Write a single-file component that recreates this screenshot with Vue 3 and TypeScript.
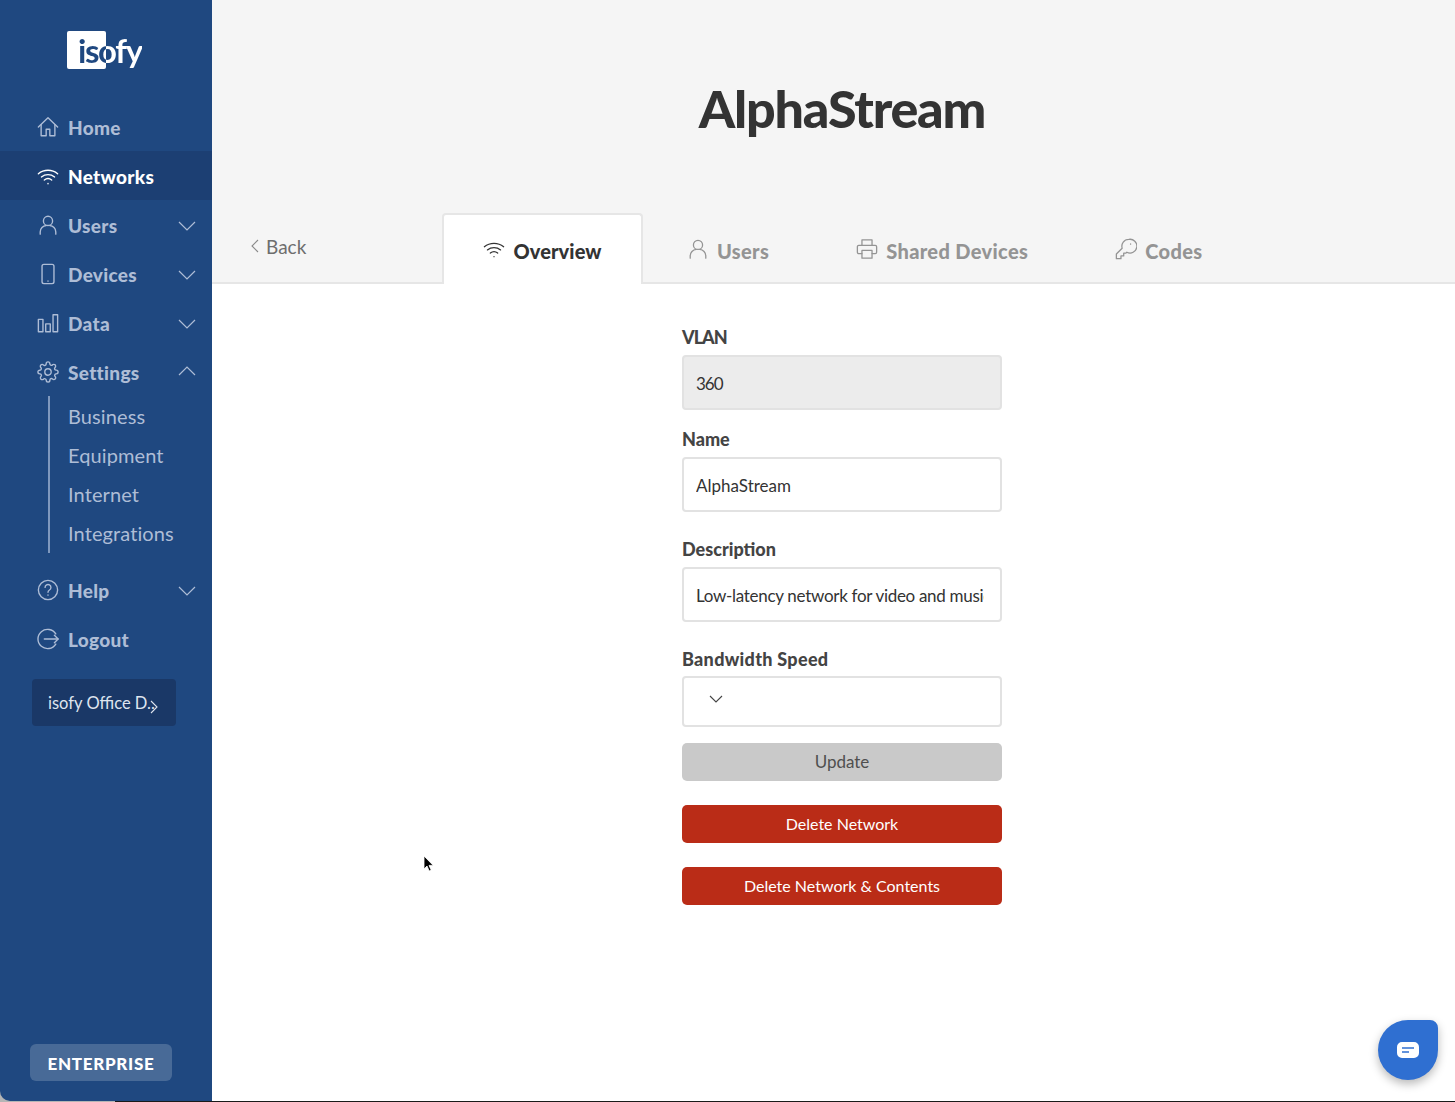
<script setup lang="ts">
type IconName = 'home' | 'wifi' | 'user' | 'phone' | 'bars' | 'gear' | 'help' | 'logout' | 'printer' | 'key'

const icons: Record<IconName, string[]> = {
  home: ['M1.5 12 12 2l10.5 10', 'M4.5 9.5V21.5h5.5v-7h4v7h5.5V9.5'],
  wifi: ['M1.5 9.5C7.5 4.5 16.5 4.5 22.5 9.5', 'M4.8 13C9 9.6 15 9.6 19.2 13', 'M8 16.4c2.4-1.9 5.6-1.9 8 0', 'M12 20.2v.2'],
  user: ['M12 2.5a5 5 0 1 0 0 10 5 5 0 0 0 0-10z', 'M3.5 22v-2.5c0-3.6 3-6.6 6.5-7', 'M20.5 22v-2.5c0-3.6-3-6.6-6.5-7'],
  phone: ['M7.5 1.5h9a2 2 0 0 1 2 2v17a2 2 0 0 1-2 2h-9a2 2 0 0 1-2-2v-17a2 2 0 0 1 2-2z', 'M12 19.6v.2'],
  bars: ['M1.5 8h5v13.5h-5z', 'M9.5 13h5v8.5h-5z', 'M17.5 3h5v18.5h-5z'],
  gear: ['M19.4 15a1.65 1.65 0 0 0 .33 1.82l.06.06a2 2 0 0 1 0 2.83 2 2 0 0 1-2.83 0l-.06-.06a1.65 1.65 0 0 0-1.82-.33 1.65 1.65 0 0 0-1 1.51V21a2 2 0 0 1-2 2 2 2 0 0 1-2-2v-.09A1.65 1.65 0 0 0 9 19.4a1.65 1.65 0 0 0-1.82.33l-.06.06a2 2 0 0 1-2.83 0 2 2 0 0 1 0-2.83l.06-.06a1.65 1.65 0 0 0 .33-1.82 1.65 1.65 0 0 0-1.51-1H3a2 2 0 0 1-2-2 2 2 0 0 1 2-2h.09A1.65 1.65 0 0 0 4.6 9a1.65 1.65 0 0 0-.33-1.82l-.06-.06a2 2 0 0 1 0-2.83 2 2 0 0 1 2.83 0l.06.06a1.65 1.65 0 0 0 1.82.33H9a1.65 1.65 0 0 0 1-1.51V3a2 2 0 0 1 2-2 2 2 0 0 1 2 2v.09a1.65 1.65 0 0 0 1 1.51 1.65 1.65 0 0 0 1.82-.33l.06-.06a2 2 0 0 1 2.83 0 2 2 0 0 1 0 2.83l-.06.06a1.65 1.65 0 0 0-.33 1.82V9a1.65 1.65 0 0 0 1.51 1H21a2 2 0 0 1 2 2 2 2 0 0 1-2 2h-.09a1.65 1.65 0 0 0-1.51 1z', 'M12 8.5a3.5 3.5 0 1 0 0 7 3.5 3.5 0 0 0 0-7z'],
  help: ['M12 1.5a10.5 10.5 0 1 0 0 21 10.5 10.5 0 0 0 0-21z', 'M8.8 9.2a3.2 3.2 0 1 1 4.8 2.8c-1 .6-1.6 1.2-1.6 2.4', 'M12 17.4v.2'],
  logout: ['M20.5 6.5A10.5 10.5 0 1 0 20.5 17.5', 'M8 12h15', 'M19 8l4 4-4 4'],
  printer: ['M6.5 8V2h11v6', 'M6.5 17H3a1.5 1.5 0 0 1-1.5-1.5v-6A1.5 1.5 0 0 1 3 8h18a1.5 1.5 0 0 1 1.5 1.5v6A1.5 1.5 0 0 1 21 17h-3.5', 'M6.5 13.5h11v8.5h-11z'],
  key: ['M15 1.5a7.5 7.5 0 0 0-7.2 9.6L1.5 17.5v5h5v-3h3v-3h2.4l1-1A7.5 7.5 0 1 0 15 1.5z', 'M17 6.5v.2'],
}

const navTop: { label: string; icon: IconName; active?: boolean; chevron?: boolean }[] = [
  { label: 'Home', icon: 'home' },
  { label: 'Networks', icon: 'wifi', active: true },
  { label: 'Users', icon: 'user', chevron: true },
  { label: 'Devices', icon: 'phone', chevron: true },
  { label: 'Data', icon: 'bars', chevron: true },
]
const subItems = ['Business', 'Equipment', 'Internet', 'Integrations']
const navBottom: { label: string; icon: IconName; chevron?: boolean }[] = [
  { label: 'Help', icon: 'help', chevron: true },
  { label: 'Logout', icon: 'logout' },
]
const tabs: { label: string; icon: IconName }[] = [
  { label: 'Users', icon: 'user' },
  { label: 'Shared Devices', icon: 'printer' },
  { label: 'Codes', icon: 'key' },
]
</script>

<template>
  <div class="page">
    <aside class="sidebar">
      <div class="logo-row">
        <div class="logo">
          <span class="logo-box"></span>
          <span class="logo-text">isofy</span>
        </div>
      </div>
      <nav class="nav">
        <a v-for="item in navTop" :key="item.label" class="nav-item" :class="{ active: item.active }">
          <svg class="nav-icon" viewBox="0 0 24 24"><path v-for="d in icons[item.icon]" :key="d" :d="d" /></svg>
          <span>{{ item.label }}</span>
          <svg v-if="item.chevron" class="chev" viewBox="0 0 18 10"><path d="M1 1l8 8 8-8" /></svg>
        </a>
        <a class="nav-item">
          <svg class="nav-icon" viewBox="0 0 24 24"><path v-for="d in icons.gear" :key="d" :d="d" /></svg>
          <span>Settings</span>
          <svg class="chev up" viewBox="0 0 18 10"><path d="M1 9l8-8 8 8" /></svg>
        </a>
        <div class="sub-list">
          <a v-for="s in subItems" :key="s" class="sub-item">{{ s }}</a>
        </div>
        <a v-for="item in navBottom" :key="item.label" class="nav-item">
          <svg class="nav-icon" viewBox="0 0 24 24"><path v-for="d in icons[item.icon]" :key="d" :d="d" /></svg>
          <span>{{ item.label }}</span>
          <svg v-if="item.chevron" class="chev" viewBox="0 0 18 10"><path d="M1 1l8 8 8-8" /></svg>
        </a>
      </nav>
      <button class="workspace">
        <span>isofy Office D..</span>
        <svg class="workspace-chev" viewBox="0 0 8 14"><path d="M1 1l6 6-6 6" /></svg>
      </button>
      <div class="plan">ENTERPRISE</div>
    </aside>

    <main class="main">
      <header class="top">
        <h1 class="title">AlphaStream</h1>
        <div class="tabbar">
          <a class="back">
            <svg class="back-chev" viewBox="0 0 8 14"><path d="M7 1L1 7l6 6" /></svg>
            <span>Back</span>
          </a>
          <a class="tab current">
            <svg class="tab-icon" viewBox="0 0 24 24"><path v-for="d in icons.wifi" :key="d" :d="d" /></svg>
            <span>Overview</span>
          </a>
          <div class="rest">
            <a v-for="t in tabs" :key="t.label" class="tab">
              <svg class="tab-icon" viewBox="0 0 24 24"><path v-for="d in icons[t.icon]" :key="d" :d="d" /></svg>
              <span>{{ t.label }}</span>
            </a>
          </div>
        </div>
      </header>

      <form class="form" @submit.prevent>
        <label class="field first">
          <span class="label">VLAN</span>
          <input class="input disabled" value="360" readonly />
        </label>
        <label class="field near">
          <span class="label">Name</span>
          <input class="input" value="AlphaStream" />
        </label>
        <label class="field">
          <span class="label">Description</span>
          <input class="input long" value="Low-latency network for video and music" />
        </label>
        <div class="field">
          <span class="label tight">Bandwidth Speed</span>
          <div class="select">
            <svg class="select-chev" viewBox="0 0 14 8"><path d="M1 1l6 6 6-6" /></svg>
          </div>
        </div>
        <button class="btn update" type="button">Update</button>
        <button class="btn danger" type="button">Delete Network</button>
        <button class="btn danger" type="button">Delete Network &amp; Contents</button>
      </form>
    </main>

    <svg class="cursor" viewBox="0 0 12 18"><path d="M1 1v13l3-3 2.2 5 2-.9L6 10.4h4.2z" /></svg>
    <button class="chat" type="button" aria-label="Chat">
      <svg viewBox="0 0 24 18"><path fill-rule="evenodd" d="M6 1h12a5 5 0 0 1 5 5v6a5 5 0 0 1-5 5H6a5 5 0 0 1-5-5V6a5 5 0 0 1 5-5zM6 6.2v1.6h12V6.2zM6 10.2v1.6h7v-1.6z" /></svg>
    </button>
    <div class="edge"></div>
  </div>
</template>

<style>
html, body { margin: 0; background: #fff; }
</style>

<style scoped>
.page {
  position: relative;
  display: flex;
  width: 1455px;
  height: 1102px;
  overflow: hidden;
  background: #b5b5b5;
  font-family: "Lato", "Open Sans", sans-serif;
}
.sidebar {
  flex: 0 0 212px;
  display: flex;
  flex-direction: column;
  margin-bottom: 1px;
  background: #1f4880;
  border-bottom-left-radius: 10px;
}
.logo-row { height: 102px; padding: 31px 0 0 67px; box-sizing: border-box; flex: none; }
.logo { position: relative; width: 76px; height: 40px; }
.logo-box {
  position: absolute; left: 0; top: 0; width: 39px; height: 38px;
  background: #fff; border-radius: 2px;
}
.logo-text {
  position: absolute; left: 11px; top: -1px;
  font-size: 33px; line-height: 40px; letter-spacing: -1.4px; font-weight: 700;
  background: linear-gradient(90deg, #1f4880 0 28px, #fff 28px);
  -webkit-background-clip: text; background-clip: text; color: transparent;
}
.nav { display: flex; flex-direction: column; }
.nav-item {
  display: flex; align-items: center;
  height: 49px; padding: 2px 0 0 37px; box-sizing: border-box;
  color: #aebdd6; font-size: 19px; font-weight: 900; letter-spacing: .3px;
}
.nav-item span { margin-left: 9px; }
.nav-item.active { background: #1c3f73; color: #fff; }
.nav-icon {
  width: 22px; height: 22px; flex: none; margin-top: -2px;
  fill: none; stroke: currentColor; stroke-width: 1.5; stroke-linecap: round; stroke-linejoin: round;
}
.chev {
  width: 18px; height: 10px; margin-left: auto; margin-right: 16px; margin-top: 0;
  fill: none; stroke: currentColor; stroke-width: 1.2;
}
.chev.up { margin-top: -3px; }
.sub-list {
  margin: 0 0 12px 48px; padding: 1px 0 0 19px;
  border-left: 2px solid #7f98bd; height: 157px; box-sizing: border-box;
  display: flex; flex-direction: column;
}
.sub-item {
  height: 39px; line-height: 39px; flex: none; margin-left: -1px;
  color: #aebdd6; font-size: 20px; font-weight: 400; letter-spacing: .1px;
}
.workspace {
  display: flex; align-items: center; flex: none;
  width: 144px; height: 47px; margin: 16px 0 0 32px; padding: 0 0 0 16px; box-sizing: border-box;
  background: #1a3867; border: 0; border-radius: 4px;
  color: #dfe5ef; font-family: inherit; font-size: 16.5px; white-space: nowrap;
}
.workspace-chev {
  width: 8px; height: 14px; margin-left: -4.5px; margin-top: 9px; fill: none; stroke: #dfe5ef; stroke-width: 1.1;
}
.plan {
  width: 142px; height: 37px; margin: auto 0 20px 30px; box-sizing: border-box; flex: none;
  background: #486a97; border-radius: 6px;
  color: #fff; font-size: 17px; font-weight: 900; line-height: 39px; text-align: center; letter-spacing: .7px;
}
.main { flex: 1; min-width: 0; display: flex; flex-direction: column; background: #fff; }
.top { background: #f5f5f5; }
.title {
  height: 213px; margin: 0; padding: 78px 0 0 17px; box-sizing: border-box;
  color: #333; font-size: 52px; line-height: 60px; font-weight: 900; letter-spacing: -1.2px; text-align: center;
}
.tabbar {
  display: flex; height: 71px; box-sizing: border-box;
  border-bottom: 2px solid #e6e6e6;
}
.back {
  flex: 0 0 230px; box-sizing: border-box; padding: 0 0 2px 39px;
  display: flex; align-items: center; gap: 7px;
  color: #6e6e6e; font-size: 19px;
}
.back-chev { width: 8px; height: 14px; fill: none; stroke: #8a8a8a; stroke-width: 1.1; margin-top: -1px; }
.tab {
  display: flex; align-items: center; gap: 8px;
  padding: 6px 43.5px 0; color: #949494; font-size: 20px; font-weight: 900; letter-spacing: .35px;
}
.tab-icon {
  width: 22px; height: 22px; margin-top: -3px; flex: none;
  fill: none; stroke: currentColor; stroke-width: 1.4; stroke-linecap: round; stroke-linejoin: round;
}
.tab.current {
  flex: 0 0 201px; box-sizing: border-box; justify-content: center; padding: 2px 0 0;
  height: 71px; background: #fff; color: #333; letter-spacing: .1px;
  border: 2px solid #e6e6e6; border-bottom: 0; border-radius: 4px 4px 0 0;
}
.rest { display: flex; margin-left: .5px; }
.form {
  width: 320px; margin-left: 470px; padding-top: 41px;
  display: flex; flex-direction: column;
}
.field { display: flex; flex-direction: column; margin-top: 25px; }
.field.first { margin-top: 0; }
.field.near { margin-top: 17px; }
.label {
  height: 24px; line-height: 24px; margin-bottom: 6px;
  color: #444; font-size: 18px; font-weight: 900;
}
.field.first .label { letter-spacing: -1px; }
.label.tight { margin-bottom: 5px; letter-spacing: .3px; }
.input {
  width: 320px; height: 55px; padding: 1px 16px 0 12px; box-sizing: border-box;
  background: #fff; border: 2px solid #e2e2e2; border-radius: 4px; outline: 0;
  color: #333; font-family: inherit; font-size: 17px;
}
.input.disabled { background: #ececec; letter-spacing: -1px; }
.input.long { letter-spacing: -.3px; }
.select {
  height: 51px; box-sizing: border-box; padding: 17px 0 0 25px;
  border: 2px solid #e2e2e2; border-radius: 4px; background: #fff;
}
.select-chev { display: block; width: 14px; height: 8px; fill: none; stroke: #444; stroke-width: 1.1; }
.btn {
  width: 320px; height: 38px; border: 0; border-radius: 5px;
  font-family: inherit; font-size: 16px;
}
.update { margin-top: 16px; padding: 0 0 1px; background: #c9c9c9; color: #4f4f4f; font-size: 17px; }
.danger { margin-top: 24px; padding: 0 0 2px; background: #ba2c17; color: #fff; }
.cursor {
  position: absolute; left: 423px; top: 855px; width: 12px; height: 18px;
  fill: #000; stroke: #fff; stroke-width: .8;
}
.chat {
  position: absolute; left: 1378px; top: 1020px; width: 60px; height: 60px; padding: 0;
  display: flex; align-items: center; justify-content: center;
  background: #2f6fd1; border: 0; border-radius: 50% 8px 50% 50%;
  box-shadow: 0 4px 10px rgba(0, 0, 0, .28);
}
.chat svg { width: 24px; height: 18px; fill: #fff; }
.edge {
  position: absolute; left: 115px; right: 0; bottom: 0; height: 1px; background: #1a1a1a;
}
</style>
